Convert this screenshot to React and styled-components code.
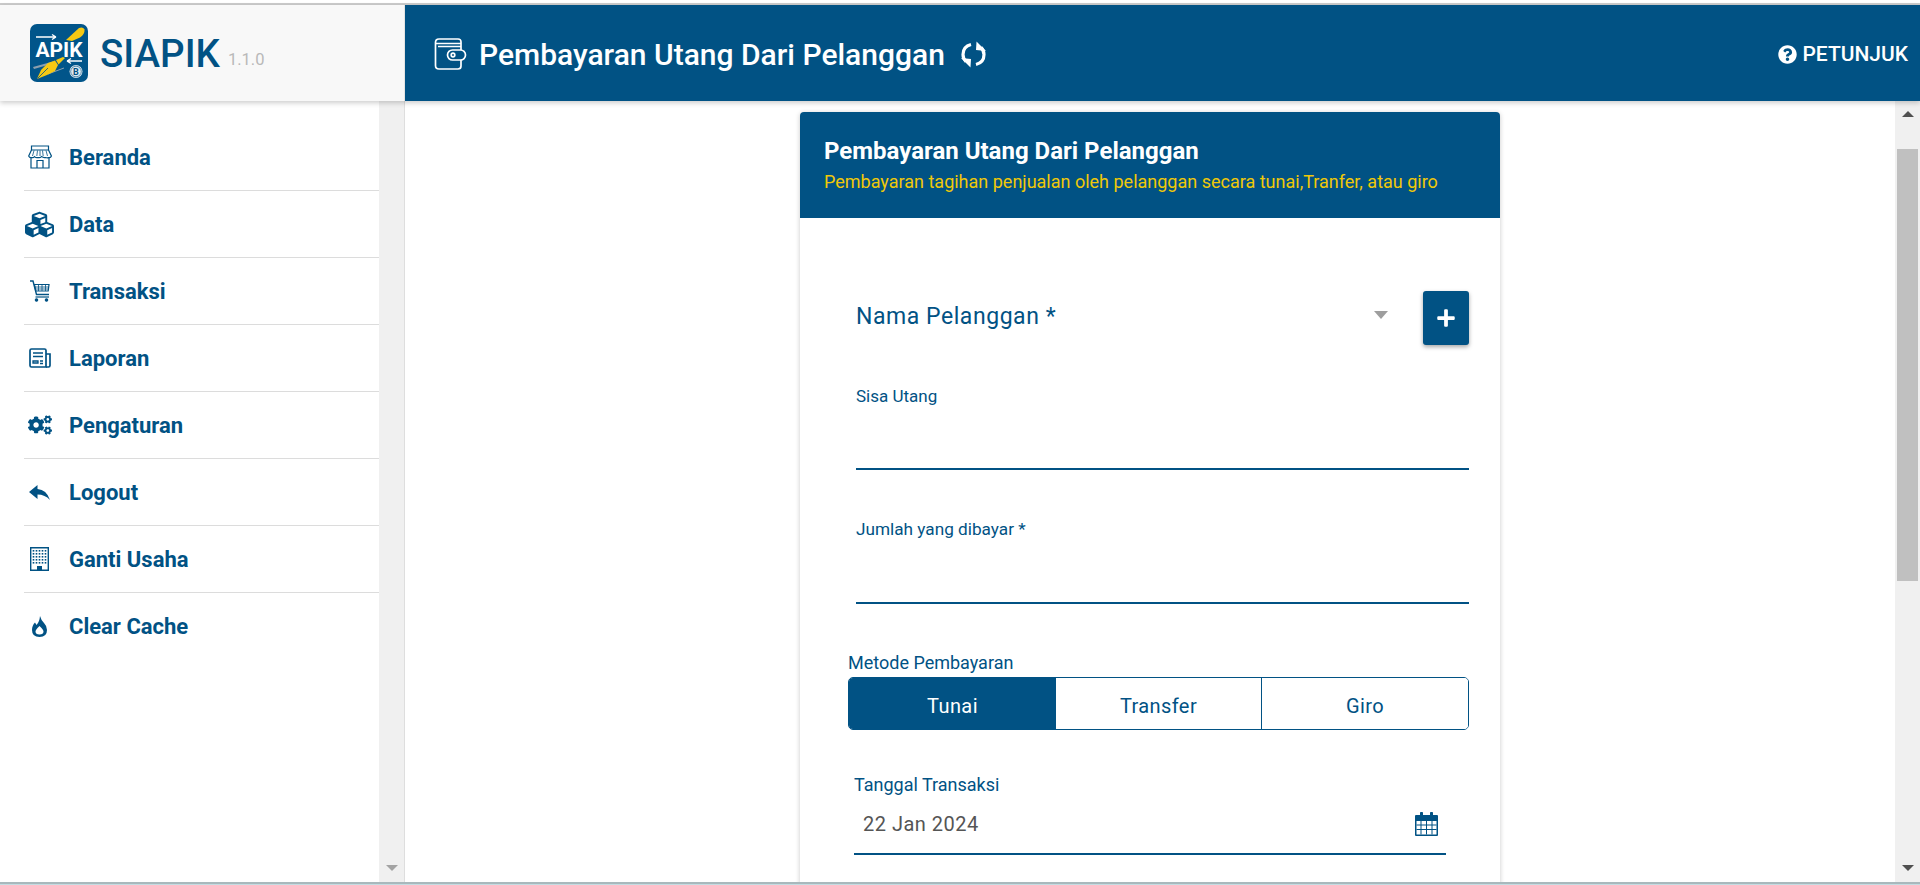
import React from "react";
import styled, { createGlobalStyle } from "styled-components";
import { FaCubes, FaCogs, FaQuestionCircle, FaPlus } from "react-icons/fa";

const BLUE = "#015284";

const Global = createGlobalStyle`
  html, body { margin: 0; padding: 0; height: 100%; overflow: hidden; background: #fff; }
  body { font-family: Roboto, "Liberation Sans", sans-serif; }
  * { box-sizing: border-box; }
`;

const Page = styled.div`
  height: 885px;
  display: flex;
  flex-direction: column;
  overflow: hidden;
  background: #fff;
`;
const TopStrip = styled.div`
  height: 5px;
  flex: none;
  background: #fff;
  border-bottom: 2px solid #cccccc;
`;
const Header = styled.header`
  height: 96px;
  flex: none;
  display: flex;
  position: relative;
  z-index: 2;
  box-shadow: 0 2px 5px rgba(0, 0, 0, 0.2);
`;
const Brand = styled.div`
  width: 405px;
  flex: none;
  display: flex;
  align-items: center;
  padding: 0 0 0 30px;
  background: #f8f8f8;
  border-right: 1px solid #e4e4e4;
`;
const BrandName = styled.span`
  margin-left: 12px;
  font-size: 38.5px;
  font-weight: 500;
  color: ${BLUE};
`;
const Version = styled.span`
  margin: 13px 0 0 8px;
  font-size: 16.5px;
  color: #b9b9b9;
`;
const TitleBar = styled.div`
  flex: 1;
  display: flex;
  align-items: center;
  padding: 2px 12px 0 29px;
  background: ${BLUE};
  color: #fff;
`;
const PageTitle = styled.h1`
  margin: 0 15px 0 12px;
  font-size: 30px;
  font-weight: 500;
`;
const Help = styled.div`
  margin-left: auto;
  display: flex;
  align-items: center;
  gap: 5px;
  font-size: 21px;
  font-weight: 500;
`;
const Body = styled.div`
  flex: 1;
  min-height: 0;
  display: flex;
`;
const Sidebar = styled.aside`
  width: 405px;
  flex: none;
  display: flex;
  border-right: 1px solid #dedede;
`;
const Nav = styled.nav`
  flex: 1;
  padding: 23px 0 0 24px;
`;
const NavItem = styled.a`
  height: 67px;
  display: flex;
  align-items: center;
  border-bottom: ${(p) => (p.$last ? "none" : "1px solid #dcdcdc")};
  color: ${BLUE};
  font-size: 22px;
  font-weight: 700;
`;
const NavIcon = styled.span`
  width: 45px;
  flex: none;
  display: flex;
  justify-content: center;
  padding-right: 14px;
  font-size: ${(p) => p.$size || 24}px;
`;
const Scrollbar = styled.div`
  width: 25px;
  flex: none;
  display: flex;
  flex-direction: column;
  align-items: center;
  background: #f0f0f0;
  padding: 10px 0 11px;
`;
const Arrow = styled.span`
  width: 0;
  height: 0;
  flex: none;
  border-left: 6px solid transparent;
  border-right: 6px solid transparent;
  border-${(p) => (p.$up ? "bottom" : "top")}: 6px solid ${(p) => p.$color};
`;
const Thumb = styled.div`
  width: 21px;
  height: 432px;
  flex: none;
  margin-top: 32px;
  background: #c0c0c0;
`;
const Spacer = styled.div`
  flex: 1;
`;
const Main = styled.main`
  flex: 1;
  min-width: 0;
  display: flex;
  justify-content: center;
  overflow: hidden;
  padding-top: 11px;
`;
const Card = styled.section`
  width: 700px;
  height: 900px;
  flex: none;
  background: #fff;
  border-radius: 4px 4px 0 0;
  box-shadow: 0 1px 5px rgba(0, 0, 0, 0.22);
`;
const CardHead = styled.div`
  height: 106px;
  padding: 23px 24px 0;
  background: ${BLUE};
  border-radius: 4px 4px 0 0;
`;
const CardTitle = styled.h2`
  margin: 0;
  font-size: 24px;
  line-height: 32px;
  font-weight: 700;
  color: #fff;
`;
const CardSub = styled.p`
  margin: 3px 0 0;
  font-size: 18px;
  line-height: 24px;
  color: #f0c808;
`;
const Form = styled.div`
  padding-top: 73px;
`;
const CustomerRow = styled.div`
  display: flex;
  height: 54px;
  padding: 0 31px 0 56px;
`;
const Select = styled.div`
  flex: 1;
  display: flex;
  align-items: center;
  padding: 0 35px 4px 0;
  font-size: 23px;
  letter-spacing: 0.55px;
  color: ${BLUE};
  justify-content: space-between;
`;
const SelectArrow = styled.span`
  width: 0;
  height: 0;
  border-left: 7px solid transparent;
  border-right: 7px solid transparent;
  border-top: 8px solid #9e9e9e;
  margin-bottom: 3px;
`;
const AddButton = styled.button`
  width: 46px;
  height: 54px;
  flex: none;
  display: flex;
  align-items: center;
  justify-content: center;
  border: none;
  border-radius: 3px;
  background: ${BLUE};
  color: #fff;
  font-size: 20px;
  box-shadow: 0 2px 4px rgba(0, 0, 0, 0.35);
`;
const TextField = styled.div`
  margin: ${(p) => p.$top}px 31px 0 56px;
  height: ${(p) => p.$height}px;
  border-bottom: 2px solid ${BLUE};
`;
const SmallLabel = styled.label`
  display: block;
  font-size: ${(p) => p.$size}px;
  line-height: 20px;
  color: ${BLUE};
`;
const PaymentGroup = styled.div`
  margin: 49px 31px 0 48px;
`;
const Segments = styled.div`
  display: flex;
  height: 53px;
  margin-top: 4px;
  border: 1px solid ${BLUE};
  border-radius: 5px;
  overflow: hidden;
`;
const Segment = styled.button`
  flex: ${(p) => p.$w} 0 0;
  padding: 5px 0 0;
  border: none;
  border-left: ${(p) => (p.$divider ? `1px solid ${BLUE}` : "none")};
  background: ${(p) => (p.$active ? BLUE : "#fff")};
  color: ${(p) => (p.$active ? "#fff" : BLUE)};
  font-family: inherit;
  font-size: 20px;
  letter-spacing: 0.4px;
`;
const DateField = styled.div`
  margin: 45px 54px 0 54px;
  height: 80px;
  border-bottom: 2px solid ${BLUE};
`;
const DateRow = styled.div`
  display: flex;
  align-items: center;
  justify-content: space-between;
  height: 58px;
  padding: 0 8px 0 9px;
  color: #555;
  font-size: 20px;
  letter-spacing: 0.5px;
`;
const BottomStrip = styled.div`
  height: 3px;
  flex: none;
  background: linear-gradient(#a9b8bc 0 2px, #c4dce2 2px);
  position: relative;
  z-index: 3;
`;

const Logo = () => (
  <svg width="58" height="58" viewBox="0 0 58 58">
    <rect width="58" height="58" rx="7" fill="#01558a" />
    <path d="M36 16 L49 4 Q53 2.500 54.500 5.500 Q55 10 50 13.500 L42 17 Z" fill="#f6c913" />
    <path d="M3 43 L23 37.500 L23 39.500 L4 45 Z" fill="#8b9fae" />
    <path d="M18 50 L34 44" stroke="#8b9fae" strokeWidth="1" />
    <path d="M7 55 L11 46 L18 39 L25 36.500 L28 41 L25 47 L17 51 Z" fill="#f6c913" />
    <path d="M26 36 L33 33 L35 34 L28.500 40.500 Z" fill="#f6c913" />
    <path d="M7.500 54.500 L18 44" stroke={BLUE} strokeWidth="0.8" />
    <path d="M6 13 H26 M26 13 L22 10.500 M26 13 L22 15.500" stroke="#fff" strokeWidth="1.3" fill="none" />
    <path d="M37 37 H52 M37 37 L41 34.500 M37 37 L41 39.500" stroke="#fff" strokeWidth="1.3" fill="none" />
    <text x="5.500" y="33" fontFamily="Roboto, sans-serif" fontWeight="700" fontSize="20" fill="#fff" textLength="47" lengthAdjust="spacingAndGlyphs">APIK</text>
    <circle cx="46" cy="47.500" r="6.500" fill="#dfe9f0" />
    <circle cx="46" cy="47.500" r="5.300" fill="none" stroke={BLUE} strokeWidth="0.6" />
    <text x="43" y="51" fontFamily="Roboto, sans-serif" fontWeight="700" fontSize="9" fill={BLUE}>B</text>
  </svg>
);

const Stroke = ({ w, h, vb, sw = 1.5, children }) => (
  <svg width={w} height={h} viewBox={vb} fill="none" stroke="currentColor" strokeWidth={sw}>
    {children}
  </svg>
);

const Store = () => (
  <Stroke w={24} h={24} vb="0 0 24 24" sw={1.2}>
    <path d="M3.500 1h17v4h-17z" />
    <path d="M3.500 5 L.7 11 Q1.500 13 3.500 12.600 Q5.500 13 6.500 11.600 Q8 13 10 12.500 Q12 13 13.500 11.600 Q15.500 13 17.500 12.500 Q19.500 13 20.500 12.600 Q22.800 13 23.400 11 L20.500 5" />
    <path d="M6 5.500 L4.500 11 M9.500 5.500 L8.800 11 M12 5.500 V11 M14.500 5.500 L15.200 11 M18 5.500 L19.500 11" strokeWidth="0.8" />
    <path d="M3 13 V23 H21 V13 M9 23 V15.500 H15 V23" />
  </Stroke>
);

const Cart = () => (
  <Stroke w={22} h={22} vb="0 0 22 22" sw={1.2}>
    <path d="M1 1 H4 L7.500 14.500 H20" strokeWidth="1.4" />
    <path d="M5.500 4.500 H20 L19.200 11 H6.800 Z" />
    <path d="M5.800 7 H19.600 M6.400 9 H19.400 M9.500 4.500 V11 M13 4.500 V11 M16.500 4.500 V11" strokeWidth="0.8" />
    <path d="M6.500 17 H20" />
    <circle cx="7.500" cy="20" r="1.200" fill="currentColor" />
    <circle cx="17.500" cy="20" r="1.200" fill="currentColor" />
  </Stroke>
);

const News = () => (
  <Stroke w={22} h={20} vb="0 0 22 20" sw={1.7}>
    <path d="M1 17.500 V2.500 Q1 1 2.500 1 H15.500 Q17 1 17 2.500 V19 H2.500 Q1 19 1 17.500 Z" />
    <path d="M17 6 H21 V17.500 Q21 19 19.500 19 H17" />
    <path d="M4 5 H14 M4 8.500 H14" strokeWidth="1.6" />
    <path d="M4 13 H9 V15 H4 Z M11 13 H14 M11 15.500 H14" strokeWidth="1.300" />
  </Stroke>
);

const Reply = () => (
  <svg width="21" height="15" viewBox="0 0 21 15" fill="currentColor">
    <path d="M0 7 L8.500 0 V4 Q17.500 4.500 21 15 Q16 9.500 8.500 9.500 V14 Z" />
  </svg>
);

const Flame = () => (
  <svg width="15" height="21" viewBox="0 0 15 21" fill="currentColor">
    <path
      fillRule="evenodd"
      d="M8 0 Q9 4 12 7 Q15 10 15 14 Q15 21 7.500 21 Q0 21 0 14 Q0 9.500 3 6.500 L4.500 9 Q7.500 6 8 0 Z M7.500 10 Q3.500 13.500 3.500 15.500 Q3.500 18.500 7.500 18.500 Q11.500 18.500 11.500 15.500 Q11.500 13.500 7.500 10 Z"
    />
  </svg>
);

const Building = () => (
  <svg width="19" height="24" viewBox="0 0 19 24" fill="currentColor">
    <path fillRule="evenodd" d="M0 0H19V24H0ZM1.400 1.400V22.600H7V19H12V22.600H17.600V1.400Z" />
    {[3, 6, 9, 12, 15].map((y) =>
      [3.5, 6.5, 9.5, 12.5, 15.5].map((x) => <rect key={`${x}-${y}`} x={x - 0.8} y={y} width="1.6" height="1.6" />)
    )}
  </svg>
);

const Wallet = () => (
  <Stroke w={33} h={32} vb="0 0 33 32" sw={1.7}>
    <path d="M27 12 V4 Q27 1 24 1 H5 Q1.500 1 1.500 4.500 V27.500 Q1.500 31 5 31 H24 Q27 31 27 28 V22" />
    <path d="M1.800 5.500 H27 M4 8.500 H27" strokeWidth="1.5" />
    <rect x="13.500" y="12" width="18" height="10" rx="5" />
    <circle cx="19" cy="17" r="1.800" />
  </Stroke>
);

const Sync = () => (
  <svg width="27" height="27" viewBox="0 0 27 27" fill="none" stroke="currentColor" strokeWidth="3.200">
    <path d="M11 3.500 Q3 5.500 3 13.500 Q3 17.500 6 20.500" />
    <path d="M16 23.500 Q24 21.500 24 13.500 Q24 9.500 21 6.500" />
    <path d="M1 17 L11 18 L10.500 26.500 Z" fill="currentColor" stroke="none" />
    <path d="M26 10 L16 9 L16.500 .5 Z" fill="currentColor" stroke="none" />
  </svg>
);

const Calendar = () => (
  <svg width="23" height="24" viewBox="0 0 23 24" fill={BLUE}>
    <path fillRule="evenodd" d="M1 3H5V1.200a1.500 1.500 0 0 1 3 0V3H15V1.200a1.500 1.500 0 0 1 3 0V3H22a1 1 0 0 1 1 1V23a1 1 0 0 1-1 1H1a1 1 0 0 1-1-1V4a1 1 0 0 1 1-1ZM1.500 9V22.500H21.500V9Z" />
    <path d="M1.500 13H21.500M1.500 17.500H21.500M6 9V22.500M11.500 9V22.500M17 9V22.500" stroke={BLUE} strokeWidth="1" />
  </svg>
);

const menu = [
  ["Beranda", <Store />],
  ["Data", <FaCubes />, 29],
  ["Transaksi", <Cart />],
  ["Laporan", <News />],
  ["Pengaturan", <FaCogs />, 24],
  ["Logout", <Reply />],
  ["Ganti Usaha", <Building />],
  ["Clear Cache", <Flame />],
];

export default function App() {
  return (
    <Page>
      <Global />
      <TopStrip />
      <Header>
        <Brand>
          <Logo />
          <BrandName>SIAPIK</BrandName>
          <Version>1.1.0</Version>
        </Brand>
        <TitleBar>
          <Wallet />
          <PageTitle>Pembayaran Utang Dari Pelanggan</PageTitle>
          <Sync />
          <Help>
            <FaQuestionCircle size={19} />
            PETUNJUK
          </Help>
        </TitleBar>
      </Header>
      <Body>
        <Sidebar>
          <Nav>
            {menu.map(([label, icon, size], i) => (
              <NavItem key={label} $last={i === menu.length - 1}>
                <NavIcon $size={size}>{icon}</NavIcon>
                {label}
              </NavItem>
            ))}
          </Nav>
          <Scrollbar>
            <Spacer />
            <Arrow $color="#a3a3a3" />
          </Scrollbar>
        </Sidebar>
        <Main>
          <Card>
            <CardHead>
              <CardTitle>Pembayaran Utang Dari Pelanggan</CardTitle>
              <CardSub>Pembayaran tagihan penjualan oleh pelanggan secara tunai,Tranfer, atau giro</CardSub>
            </CardHead>
            <Form>
              <CustomerRow>
                <Select>
                  Nama Pelanggan *
                  <SelectArrow />
                </Select>
                <AddButton aria-label="Tambah">
                  <FaPlus />
                </AddButton>
              </CustomerRow>
              <TextField $top={41} $height={84}>
                <SmallLabel $size={17}>Sisa Utang</SmallLabel>
              </TextField>
              <TextField $top={49} $height={85}>
                <SmallLabel $size={17.2}>Jumlah yang dibayar *</SmallLabel>
              </TextField>
              <PaymentGroup>
                <SmallLabel $size={18}>Metode Pembayaran</SmallLabel>
                <Segments>
                  <Segment $w={208} $active>Tunai</Segment>
                  <Segment $w={206}>Transfer</Segment>
                  <Segment $w={207} $divider>Giro</Segment>
                </Segments>
              </PaymentGroup>
              <DateField>
                <SmallLabel $size={18}>Tanggal Transaksi</SmallLabel>
                <DateRow>
                  22 Jan 2024
                  <Calendar />
                </DateRow>
              </DateField>
            </Form>
          </Card>
        </Main>
        <Scrollbar>
          <Arrow $up $color="#505050" />
          <Thumb />
          <Spacer />
          <Arrow $color="#505050" />
        </Scrollbar>
      </Body>
      <BottomStrip />
    </Page>
  );
}
